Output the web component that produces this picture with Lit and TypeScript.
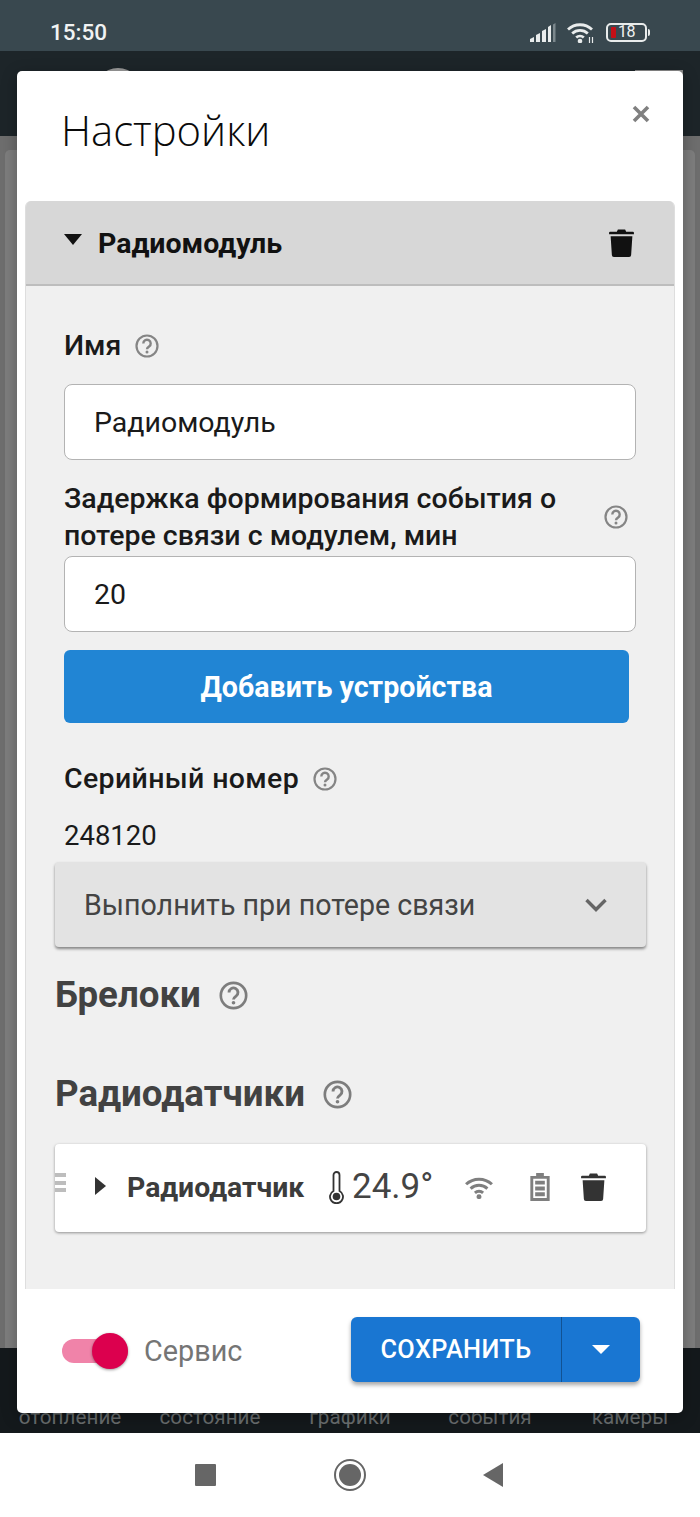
import { LitElement, html, css, svg } from 'lit';
import { customElement } from 'lit/decorators.js';

const trash = html`<svg viewBox="0 0 24 28" width="100%" height="100%"><path fill="currentColor" d="M8.5 1.5h7l1 2H23a1 1 0 0 1 1 1V6H0V4.500a1 1 0 0 1 1-1h6.500zM1.500 8h21l-1.200 18a2 2 0 0 1-2 2H4.700a2 2 0 0 1-2-2z"/></svg>`;

const help = html`<svg viewBox="0 0 24 24" width="100%" height="100%"><circle cx="12" cy="12" r="10.500" fill="none" stroke="currentColor" stroke-width="2.200"/><path fill="none" stroke="currentColor" stroke-width="2.400" d="M8.300 9.500a3.700 3.700 0 1 1 5.800 3c-1.400 1-2.100 1.500-2.100 2.800"/><circle cx="12" cy="18" r="1.500" fill="currentColor"/></svg>`;

const wifiArcs = svg`<path fill="none" stroke="currentColor" stroke-width="2.800" d="M1 7.500a17.500 17.500 0 0 1 24 0M5.200 11.500a11.500 11.500 0 0 1 15.600 0M9.200 15.500a5.800 5.800 0 0 1 7.600 0"/><circle cx="13" cy="19" r="2.300" fill="currentColor"/>`;

@customElement('app-root')
export class AppRoot extends LitElement {
  static styles = css`
    :host {
      display: block;
      position: relative;
      width: 700px;
      height: 1517px;
      overflow: hidden;
      font-family: Roboto, 'Noto Sans', sans-serif;
      color: #111;
    }
    svg {
      display: block;
    }
    .status {
      height: 51px;
      background: #39484f;
      color: #f1f3f3;
      display: flex;
      align-items: center;
      padding: 13px 50px 0 50px;
      box-sizing: border-box;
      font-size: 22.500px;
      font-weight: 500;
      justify-content: space-between;
    }
    .status-icons {
      display: flex;
      align-items: center;
      gap: 11px;
    }
    .signal {
      width: 26px;
      height: 19px;
    }
    .wifi {
      width: 28px;
      height: 21px;
      color: #e9ecec;
    }
    .battery {
      display: flex;
      align-items: center;
    }
    .battery-body {
      width: 41px;
      height: 19px;
      box-sizing: border-box;
      border: 2px solid #e9ecec;
      border-radius: 5px;
      display: flex;
      align-items: center;
      padding-left: 3px;
      gap: 2px;
      font-size: 16px;
      font-weight: 400;
      letter-spacing: -0.500px;
      line-height: 1;
    }
    .battery-level {
      width: 5px;
      height: 11px;
      border-radius: 1px;
      background: #c40f16;
    }
    .battery-tip {
      width: 2px;
      height: 7px;
      margin-left: 1px;
      background: #e9ecec;
      border-radius: 0 2px 2px 0;
    }
    .appbar {
      position: relative;
      height: 85px;
      background: #1d2529;
    }
    .avatar {
      position: absolute;
      left: 93px;
      top: 17px;
      width: 50px;
      height: 50px;
      border-radius: 50%;
      background: #9a9a9a;
    }
    .appbar-action {
      position: absolute;
      left: 635px;
      top: 19px;
      width: 48px;
      height: 20px;
      background: #8a8a8a;
    }
    .page {
      height: 1212px;
      background: #6e6e6e;
      padding: 14px 5px 0;
      box-sizing: border-box;
    }
    .page-card {
      height: 100%;
      background: #7e7e7e;
      border-radius: 5px 5px 0 0;
    }
    .tabs {
      height: 85px;
      background: #14191c;
      display: grid;
      grid-template-columns: repeat(5, 140px);
      align-items: end;
      justify-items: center;
      color: #6b6f70;
      font-size: 20.700px;
      line-height: 32px;
    }
    .navbar {
      height: 84px;
      background: #fff;
      display: flex;
      align-items: center;
      justify-content: center;
      gap: 117px;
      padding-right: 2px;
    }
    .nav-stop {
      width: 21px;
      height: 22px;
      margin-right: 1px;
      background: #666;
      border-radius: 1px;
    }
    .nav-home {
      width: 32px;
      height: 32px;
      box-sizing: border-box;
      border: 2px solid #666;
      border-radius: 50%;
      padding: 3px;
    }
    .nav-home i {
      display: block;
      width: 100%;
      height: 100%;
      border-radius: 50%;
      background: #666;
    }
    .nav-back {
      width: 20px;
      height: 24px;
    }

    .dialog {
      position: absolute;
      left: 17px;
      top: 71px;
      width: 666px;
      height: 1342px;
      background: #fff;
      border-radius: 5px;
      display: flex;
      flex-direction: column;
      box-shadow: 0 4px 16px rgba(0, 0, 0, 0.3);
    }
    .dialog-head {
      height: 130px;
      flex: none;
      padding: 30px 44px 0;
      box-sizing: border-box;
      position: relative;
    }
    .dialog-title {
      font-family: 'Open Sans', sans-serif;
      font-weight: 300;
      font-size: 41.800px;
      line-height: 58px;
      color: #0a0a0a;
    }
    .close {
      position: absolute;
      right: 33px;
      top: 34px;
      width: 18px;
      height: 18px;
      color: #808080;
    }
    .panel {
      flex: 1;
      margin: 0 8px;
      display: flex;
      flex-direction: column;
      min-height: 0;
      border-radius: 6px 6px 0 0;
      overflow: hidden;
      border: solid #dedede;
      border-width: 0 1px;
      background: #f0f0f0;
    }
    .panel-head {
      height: 85px;
      flex: none;
      box-sizing: border-box;
      background: #d7d7d7;
      border-bottom: 2px solid #bdbdbd;
      display: flex;
      align-items: center;
      padding: 0 40px 0 38px;
    }
    .caret-down {
      width: 18px;
      height: 11px;
      margin-bottom: 7px;
    }
    .panel-title {
      margin: 1px 0 0 16px;
      flex: 1;
      font-size: 28.500px;
      font-weight: 700;
      color: #111;
    }
    .panel-trash {
      width: 25px;
      height: 29px;
      color: #111;
    }
    .panel-body {
      padding: 41px 28px 0 29px;
      flex: 1;
    }
    .inner {
      padding: 0 10px 0 9px;
    }
    .label {
      display: flex;
      align-items: center;
      gap: 14px;
      font-size: 28.500px;
      font-weight: 500;
      line-height: 38px;
      color: #1a1a1a;
    }
    .help {
      width: 24px;
      height: 24px;
      flex: none;
      color: #858585;
    }
    .field {
      height: 76px;
      box-sizing: border-box;
      margin-top: 19px;
      background: #fff;
      border: 1px solid #b3b3b3;
      border-radius: 8px;
      padding: 0 29px;
      display: flex;
      align-items: center;
      font-size: 28.500px;
      color: #1a1a1a;
    }
    .label-long {
      justify-content: space-between;
      margin-top: 20px;
      line-height: 37px;
    }
    .label-long .help {
      margin-right: 8px;
    }
    .field-tight {
      margin-top: 2px;
    }
    .add {
      height: 73px;
      margin-top: 18px;
      margin-right: 7px;
      background: #2185d4;
      color: #fff;
      border-radius: 6px;
      display: flex;
      align-items: center;
      justify-content: center;
      font-size: 28.600px;
      font-weight: 700;
    }
    .label-serial {
      margin-top: 37px;
      letter-spacing: 0.350px;
    }
    .serial {
      margin-top: 19px;
      font-size: 27.500px;
      line-height: 38px;
      color: #1a1a1a;
    }
    .expander {
      height: 85px;
      margin-top: 7px;
      padding: 1px 39px 0 29px;
      box-sizing: border-box;
      background: #e3e3e3;
      border-radius: 4px;
      display: flex;
      align-items: center;
      justify-content: space-between;
      font-size: 28.600px;
      color: #444;
      box-shadow: 0 2px 3px rgba(0, 0, 0, 0.45);
    }
    .chevron {
      width: 22px;
      height: 14px;
      color: #666;
    }
    .section {
      display: flex;
      align-items: center;
      gap: 18px;
      font-size: 36.700px;
      font-weight: 700;
      color: #424242;
      line-height: 48px;
    }
    .section .help {
      width: 29px;
      height: 29px;
      color: #7d7d7d;
    }
    .section-first {
      margin-top: 24px;
    }
    .section-next {
      margin-top: 51px;
    }
    .sensor {
      position: relative;
      height: 88px;
      margin-top: 26px;
      background: #fff;
      border-radius: 4px;
      display: flex;
      align-items: center;
      box-shadow: 0 1px 3px rgba(0, 0, 0, 0.4);
      color: #3c3c3c;
    }
    .grip {
      position: absolute;
      left: 0;
      top: 29px;
      width: 11px;
      height: 19px;
      background: repeating-linear-gradient(#bdbdbd 0 4px, transparent 4px 7.500px);
    }
    .caret-right {
      width: 11px;
      height: 18px;
      margin-left: 40px;
      margin-bottom: 5px;
    }
    .sensor-name {
      margin: 0 0 2px 21px;
      font-size: 28.400px;
      font-weight: 700;
      width: 202px;
      white-space: nowrap;
    }
    .thermo {
      width: 15px;
      height: 33px;
      margin-bottom: 2px;
    }
    .temp {
      margin-left: 8px;
      width: 113px;
      font-size: 35px;
      font-weight: 400;
      color: #444;
      white-space: nowrap;
      margin-bottom: 3px;
    }
    .sensor-wifi {
      width: 28px;
      height: 23px;
      color: #7f7f7f;
      margin-bottom: 2px;
    }
    .sensor-battery {
      width: 20px;
      height: 28px;
      margin-left: 37px;
      margin-bottom: 2px;
    }
    .sensor-trash {
      width: 25px;
      height: 29px;
      margin-left: 31px;
      margin-bottom: 3px;
      color: #333;
    }
    .foot {
      height: 124px;
      flex: none;
      display: flex;
      align-items: center;
      justify-content: space-between;
      padding: 0 43px 0 45px;
      box-sizing: border-box;
    }
    .switch-row {
      display: flex;
      align-items: center;
      gap: 16px;
      font-size: 28.800px;
      color: #757575;
    }
    .switch {
      position: relative;
      width: 66px;
      height: 24px;
      border-radius: 12px;
      background: #f083a9;
    }
    .switch i {
      position: absolute;
      right: 0;
      top: -6px;
      width: 36px;
      height: 36px;
      border-radius: 50%;
      background: #dc004e;
      box-shadow: 0 1px 3px rgba(0, 0, 0, 0.4);
    }
    .save {
      display: flex;
      height: 65px;
      border-radius: 6px;
      background: #1976d2;
      color: #fff;
      box-shadow: 0 3px 4px rgba(0, 0, 0, 0.35);
      margin-bottom: 3px;
    }
    .save-main {
      width: 211px;
      box-sizing: border-box;
      border-right: 1px solid #115293;
      display: flex;
      align-items: center;
      justify-content: center;
      font-size: 25.300px;
      font-weight: 500;
      letter-spacing: 0.4px;
    }
    .save-arrow {
      width: 78px;
      display: flex;
      align-items: center;
      justify-content: center;
    }
    .save-arrow svg {
      width: 18px;
      height: 9px;
    }
  `;

  label(text: string) {
    return html`<div class="label">${text}<span class="help">${help}</span></div>`;
  }

  render() {
    return html`
      <div class="status">
        <span>15:50</span>
        <div class="status-icons">
          <svg class="signal" viewBox="0 0 26 19">
            <path fill="#e9ecec" d="M0 19v-3l4-2v5zM6 19v-7l4-2v9zM12 19V8l4-2v13zM18 19V4l3-2v17z" />
            <path fill="#7c888d" d="M23 19V1.500L25.500 0v19z" />
          </svg>
          <svg class="wifi" viewBox="0 0 28 21">
            ${wifiArcs}
            <path fill="none" stroke="currentColor" stroke-width="1.200" d="M22.500 15v6M25.500 15v6" />
          </svg>
          <div class="battery">
            <div class="battery-body"><i class="battery-level"></i>18</div>
            <i class="battery-tip"></i>
          </div>
        </div>
      </div>
      <div class="appbar">
        <i class="avatar"></i>
        <i class="appbar-action"></i>
      </div>
      <div class="page"><div class="page-card"></div></div>
      <div class="tabs">
        <span>отопление</span><span>состояние</span><span>графики</span><span>события</span><span>камеры</span>
      </div>
      <div class="navbar">
        <i class="nav-stop"></i>
        <div class="nav-home"><i></i></div>
        <svg class="nav-back" viewBox="0 0 20 24"><path fill="#666" d="M20 0v24L0 12z" /></svg>
      </div>

      <div class="dialog">
        <div class="dialog-head">
          <div class="dialog-title">Настройки</div>
          <svg class="close" viewBox="0 0 18 18">
            <path stroke="currentColor" stroke-width="3.600" d="M2 2l14 14M16 2L2 16" />
          </svg>
        </div>
        <div class="panel">
          <div class="panel-head">
            <svg class="caret-down" viewBox="0 0 18 11"><path fill="#111" d="M0 0h18L9 11z" /></svg>
            <span class="panel-title">Радиомодуль</span>
            <span class="panel-trash">${trash}</span>
          </div>
          <div class="panel-body">
            <div class="inner">
              ${this.label('Имя')}
              <div class="field">Радиомодуль</div>
              <div class="label label-long">
                <span>Задержка формирования события о<br />потере связи с модулем, мин</span>
                <span class="help">${help}</span>
              </div>
              <div class="field field-tight">20</div>
              <div class="add">Добавить устройства</div>
              <div class="label-serial">${this.label('Серийный номер')}</div>
              <div class="serial">248120</div>
            </div>
            <div class="expander">
              Выполнить при потере связи
              <svg class="chevron" viewBox="0 0 22 14">
                <path fill="none" stroke="currentColor" stroke-width="3.400" d="M1.500 2l9.500 9.500L20.500 2" />
              </svg>
            </div>
            <div class="section section-first">Брелоки<span class="help">${help}</span></div>
            <div class="section section-next">Радиодатчики<span class="help">${help}</span></div>
            <div class="sensor">
              <i class="grip"></i>
              <svg class="caret-right" viewBox="0 0 11 18"><path fill="#333" d="M0 0l11 9-11 9z" /></svg>
              <span class="sensor-name">Радиодатчик</span>
              <svg class="thermo" viewBox="0 0 15 33">
                <path fill="none" stroke="#333" stroke-width="1.800" d="M4.500 20V4a3 3 0 0 1 6 0v16a6.500 6.500 0 1 1-6 0z" />
                <circle cx="7.500" cy="25.500" r="3.800" fill="#333" />
              </svg>
              <span class="temp">24.9°</span>
              <svg class="sensor-wifi" viewBox="0 0 26 21">${wifiArcs}</svg>
              <svg class="sensor-battery" viewBox="0 0 20 29">
                <path fill="#7f7f7f" d="M6 0h8v3h6v26H0V3h6zM3 6v20h14V6z" />
                <path fill="#7f7f7f" d="M5 8h10v4H5zM5 14h10v4H5zM5 20h10v4H5z" />
              </svg>
              <span class="sensor-trash">${trash}</span>
            </div>
          </div>
        </div>
        <div class="foot">
          <div class="switch-row">
            <div class="switch"><i></i></div>
            Сервис
          </div>
          <div class="save">
            <div class="save-main">СОХРАНИТЬ</div>
            <div class="save-arrow">
              <svg viewBox="0 0 18 9"><path fill="#fff" d="M0 0h18L9 9z" /></svg>
            </div>
          </div>
        </div>
      </div>
    `;
  }
}
